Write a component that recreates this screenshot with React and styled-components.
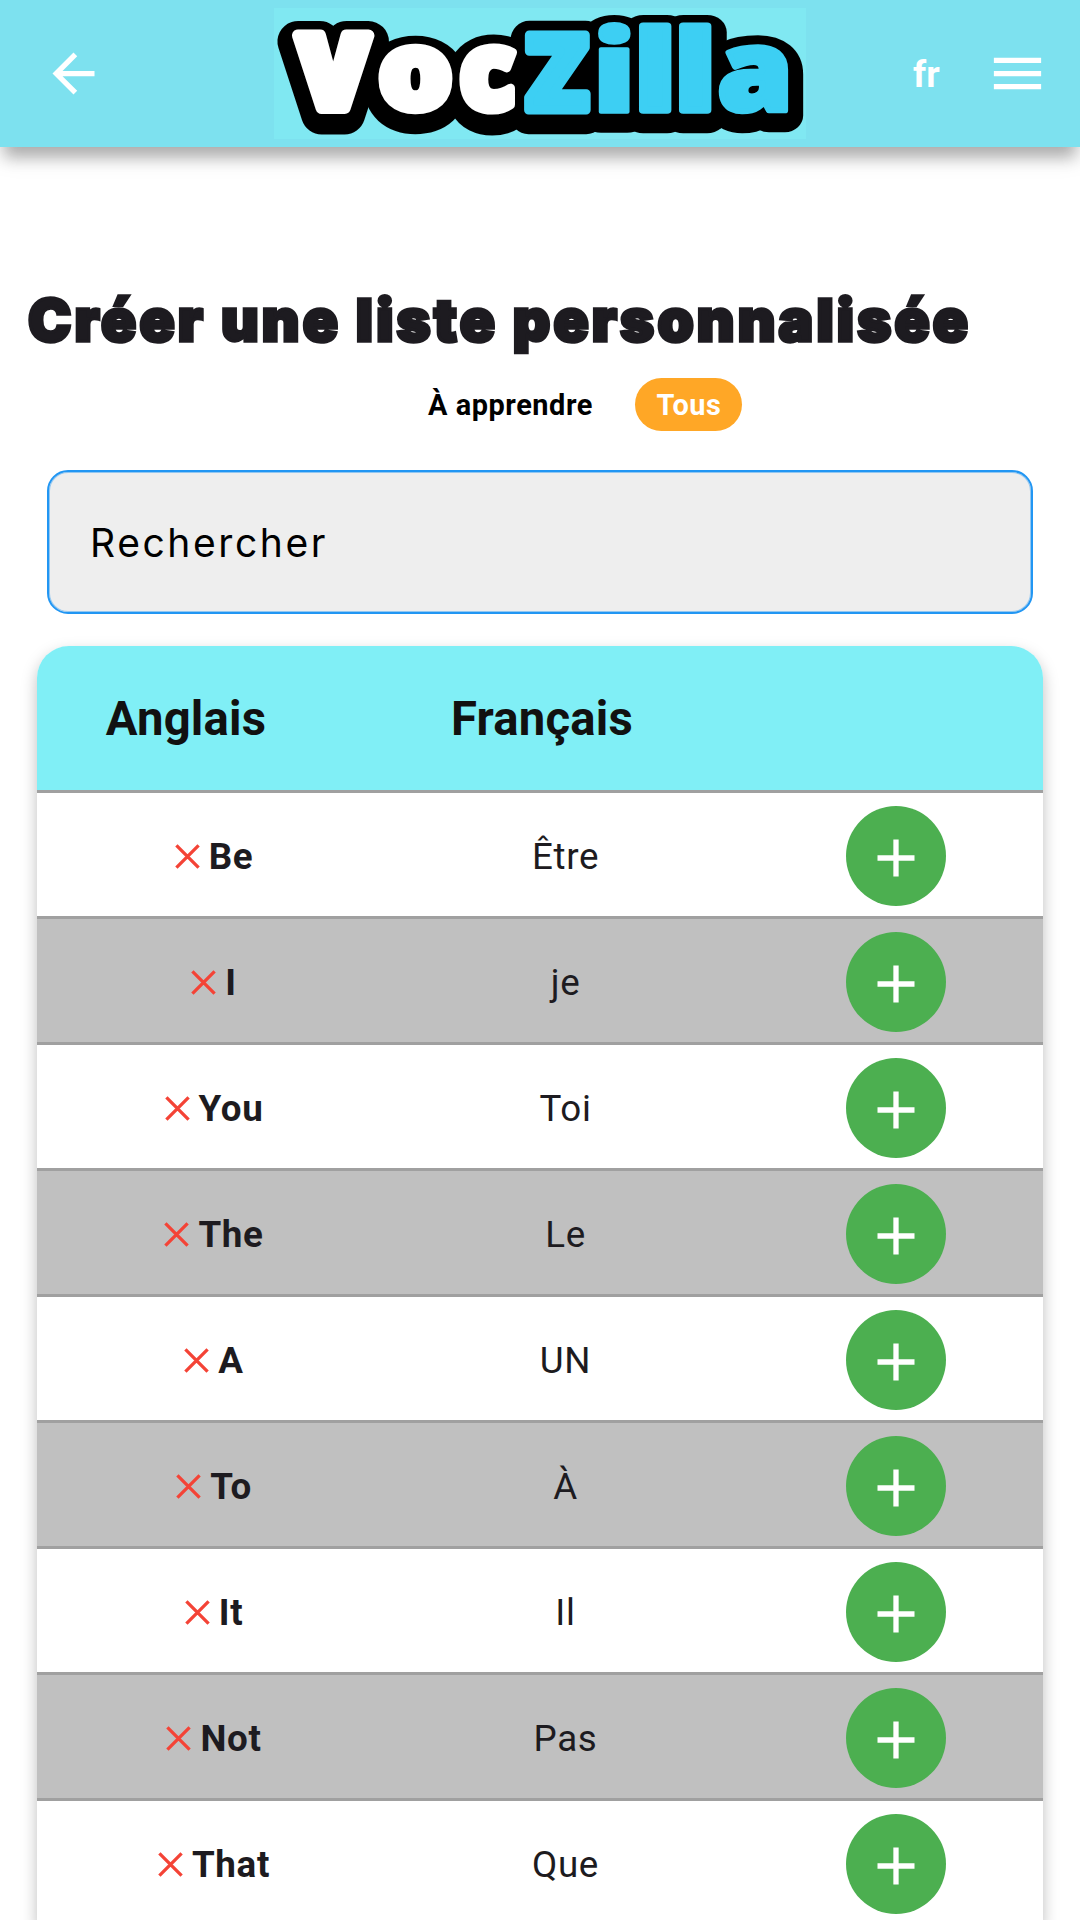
import React from "react";
import styled, { createGlobalStyle } from "styled-components";
import { MdArrowBack, MdMenu } from "react-icons/md";

const GlobalStyle = createGlobalStyle`
  * { box-sizing: border-box; }
  html, body { margin: 0; padding: 0; background: #fff; }
  body {
    width: 1080px;
    height: 1920px;
    overflow: hidden;
    font-family: Roboto, "Liberation Sans", sans-serif;
    color: #1d1b20;
  }
`;

const Screen = styled.div`
  width: 1080px;
  height: 1920px;
  overflow: hidden;
  display: flex;
  flex-direction: column;
  background: #fff;
`;

const TopBar = styled.header`
  flex: none;
  height: 147px;
  padding: 0 31px 0 42px;
  display: flex;
  align-items: center;
  background: #7de1ef;
  color: #fff;
  box-shadow: 0 15px 14px -5px rgba(0, 0, 0, 0.24), 0 10px 22px 0 rgba(0, 0, 0, 0.13);
`;

const IconButton = styled.button`
  width: 63px;
  height: 63px;
  padding: 0;
  border: 0;
  background: none;
  color: inherit;
  display: flex;
  font-size: 63px;
`;

const LogoBox = styled.svg`
  display: block;
  width: 532px;
  height: 131px;
  margin-left: 169px;
  overflow: visible;
  background: #80e8f2;
`;

const Language = styled.span`
  margin-left: 107px;
  width: 72.5px;
  padding-top: 1px;
  font-size: 36.75px;
  font-weight: 700;
`;

const Content = styled.main`
  padding: 131px 37px 0;
  display: flex;
  flex-direction: column;
`;

const Title = styled.h1`
  margin: 0 -10px 0 -9px;
  height: 84px;
  line-height: 84px;
  font-family: Inter, Roboto, sans-serif;
  font-weight: 900;
  font-size: 58px;
  letter-spacing: 3.2px;
  white-space: nowrap;
  -webkit-text-stroke: 3.4px #1d1b20;
`;

const Filters = styled.div`
  margin: 16px 0 0 370px;
  display: flex;
  gap: 22px;
`;

const Chip = styled.button`
  height: 53px;
  padding: 1px 20.5px 0 21px;
  border: 0;
  border-radius: 27px;
  background: ${(p) => (p.$active ? "#ffa726" : "transparent")};
  color: ${(p) => (p.$active ? "#fff" : "#000")};
  font: 700 28.9px/52px Roboto, sans-serif;
  letter-spacing: 0.55px;
`;

const SearchField = styled.label`
  margin: 39px 10px 0;
  height: 144px;
  padding: 0 0 0 41px;
  display: flex;
  align-items: center;
  border: 2px solid #2196f3;
  border-radius: 21px;
  background: #eee;
  box-shadow: inset 0 0 0 1px rgba(33, 150, 243, 0.45);
  color: #000;
  font-family: Inter, sans-serif;
  font-size: 39px;
  letter-spacing: 2.6px;
`;

const Table = styled.section`
  margin-top: 32px;
  border-radius: 32px 32px 0 0;
  background: #fff;
  box-shadow: 0 7px 16px rgba(0, 0, 0, 0.26);
`;

const TableHead = styled.div`
  height: 144px;
  padding-top: 2px;
  display: grid;
  grid-template-columns: 353px 350px 1fr;
  align-items: center;
  border-radius: 32px 32px 0 0;
  background: #80eff6;
  color: #111;
  font-size: 47.25px;
  font-weight: 700;
  letter-spacing: 0.2px;
`;

const HeadCell = styled.div`
  text-align: center;
  padding-right: ${(p) => p.$inset}px;
`;

const Row = styled.div`
  height: 126px;
  display: grid;
  grid-template-columns: 353px 350px 1fr;
  border-top: 3px solid #a0a0a0;
  background: ${(p) => (p.$shaded ? "#c0c0c0" : "#fff")};
  font-size: 36.75px;
  letter-spacing: 0.66px;
`;

const Cell = styled.div`
  display: flex;
  justify-content: center;
  align-items: center;
  padding: 3px 0 0 1px;
`;

const Word = styled(Cell)`
  gap: 9px;
  font-weight: 700;
`;

const ActionCell = styled(Cell)`
  padding-left: 9px;
`;

const AddButton = styled.button`
  width: 100px;
  height: 100px;
  padding: 4px 0 0;
  border: 0;
  border-radius: 50%;
  background: #4caf50;
  display: flex;
  align-items: center;
  justify-content: center;
`;

const Cross = () => (
  <svg width="25" height="25" viewBox="0 0 25 25">
    <path d="M1.4 1.4 23.6 23.6M23.6 1.4 1.4 23.6" stroke="#f44336" strokeWidth="3.3" />
  </svg>
);

const Plus = () => (
  <svg width="38" height="38" viewBox="0 0 38 38">
    <path d="M19 0.5V37.5M0.5 19H37.5" stroke="#fff" strokeWidth="5.3" />
  </svg>
);

const WHITE = "#fff";
const BLUE = "#3dcff3";

/* Letter, the box its face fills inside the logo (left, top, right, bottom), face stroke, colour. */
const LOGO_LETTERS = [
  ["V", 18, 22.5, 101, 106, 12, WHITE],
  ["o", 104.5, 36.5, 179, 107, 9, WHITE],
  ["c", 185, 36.5, 243.5, 107, 9, WHITE],
  ["Z", 249, 22.5, 317, 106, 9, BLUE],
  ["i", 324, 14.5, 357, 106, 4, BLUE],
  ["l", 364.5, 14.5, 397.5, 106, 8, BLUE],
  ["l", 404.5, 14.5, 437.5, 106, 8, BLUE],
  ["a", 444, 36.5, 514, 107, 6, BLUE],
];
const LOGO_FONT = '800 100px "Open Sans", Roboto, sans-serif';

const pen = document.createElement("canvas").getContext("2d");

function fitLetter([char, left, top, right, bottom, stroke]) {
  pen.font = LOGO_FONT;
  const m = pen.measureText(char);
  const half = stroke / 2;
  const sx = (right - left - stroke) / (m.actualBoundingBoxLeft + m.actualBoundingBoxRight);
  const sy = (bottom - top - stroke) / (m.actualBoundingBoxAscent + m.actualBoundingBoxDescent);
  const x = left + half + m.actualBoundingBoxLeft * sx;
  const y = top + half + m.actualBoundingBoxAscent * sy;
  return `matrix(${sx} 0 0 ${sy} ${x} ${y})`;
}

const LogoLetter = styled.text`
  font: ${LOGO_FONT};
  vector-effect: non-scaling-stroke;
  stroke-linejoin: round;
  stroke-width: ${(p) => p.$stroke}px;
`;

const Logo = () => (
  <LogoBox viewBox="0 0 532 131" role="img" aria-label="VocZilla">
    <g transform="translate(0 5.5)" fill="#000" stroke="#000">
      {LOGO_LETTERS.map((l, i) => (
        <LogoLetter key={i} $stroke={29 + l[5]} transform={fitLetter(l)}>{l[0]}</LogoLetter>
      ))}
      <path d="M135 55h14v35h-14zM235 50h25v40h-25z" />
    </g>
    {LOGO_LETTERS.map((l, i) => (
      <LogoLetter key={i} $stroke={l[5]} fill={l[6]} stroke={l[6]} transform={fitLetter(l)}>{l[0]}</LogoLetter>
    ))}
  </LogoBox>
);

const WORDS = [
  ["Be", "Être"],
  ["I", "je"],
  ["You", "Toi"],
  ["The", "Le"],
  ["A", "UN"],
  ["To", "À"],
  ["It", "Il"],
  ["Not", "Pas"],
  ["That", "Que"],
];

export default function App() {
  return (
    <Screen>
      <GlobalStyle />
      <TopBar>
        <IconButton aria-label="Retour"><MdArrowBack /></IconButton>
        <Logo />
        <Language>fr</Language>
        <IconButton aria-label="Menu"><MdMenu /></IconButton>
      </TopBar>
      <Content>
        <Title>Créer une liste personnalisée</Title>
        <Filters>
          <Chip>À apprendre</Chip>
          <Chip $active>Tous</Chip>
        </Filters>
        <SearchField>Rechercher</SearchField>
        <Table>
          <TableHead>
            <HeadCell $inset={55}>Anglais</HeadCell>
            <HeadCell $inset={46}>Français</HeadCell>
          </TableHead>
          {WORDS.map(([english, french], i) => (
            <Row key={english} $shaded={i % 2 === 1}>
              <Word><Cross />{english}</Word>
              <Cell>{french}</Cell>
              <ActionCell>
                <AddButton aria-label="Ajouter"><Plus /></AddButton>
              </ActionCell>
            </Row>
          ))}
        </Table>
      </Content>
    </Screen>
  );
}
